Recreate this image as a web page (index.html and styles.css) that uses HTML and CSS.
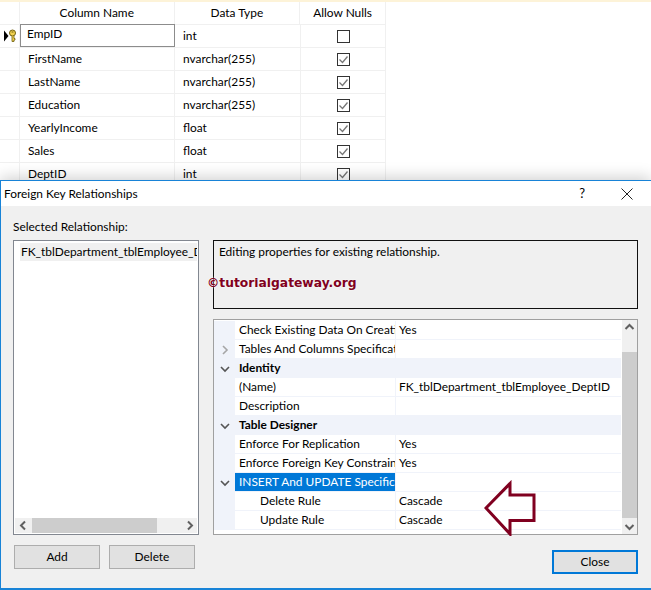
FILE: index.html
```html
<!DOCTYPE html>
<html lang="en">
<head>
<meta charset="utf-8">
<title>Foreign Key Relationships</title>
<link rel="stylesheet" href="styles.css">
</head>
<body>
<div class="page">
  <div class="topline"></div>
  <div class="table">
    <div class="row head"><div class="sel"></div><div class="c1">Column Name</div><div class="c2">Data Type</div><div class="c3">Allow Nulls</div></div>
    <div class="row">
      <div class="sel"><svg width="14" height="14" viewBox="0 0 14 14"><path d="M1 1.500l4.500 5.500L1 12.500z" fill="#000"/><circle cx="9.500" cy="4" r="3" fill="#f2d250" stroke="#6f6010"/><path d="M9 7v5.500h2V11h1V9.500h-1V7" fill="#f2d250" stroke="#6f6010" stroke-width=".8"/><path d="M8.500 3h2" stroke="#6f6010"/></svg></div>
      <div class="c1 editing">EmpID</div><div class="c2">int</div>
      <div class="c3"><svg class="cb" viewBox="0 0 13 13"><rect x=".5" y=".5" width="12" height="12" fill="#fff" stroke="#333"/></svg></div>
    </div>
    <div class="row"><div class="sel"></div><div class="c1">FirstName</div><div class="c2">nvarchar(255)</div><div class="c3"><svg class="cb" viewBox="0 0 13 13"><rect x=".5" y=".5" width="12" height="12" fill="#fff" stroke="#333"/><path d="M2.500 6.500l3 3 5-6" fill="none" stroke="#777" stroke-width="1.300"/></svg></div></div>
    <div class="row"><div class="sel"></div><div class="c1">LastName</div><div class="c2">nvarchar(255)</div><div class="c3"><svg class="cb" viewBox="0 0 13 13"><rect x=".5" y=".5" width="12" height="12" fill="#fff" stroke="#333"/><path d="M2.500 6.500l3 3 5-6" fill="none" stroke="#777" stroke-width="1.300"/></svg></div></div>
    <div class="row"><div class="sel"></div><div class="c1">Education</div><div class="c2">nvarchar(255)</div><div class="c3"><svg class="cb" viewBox="0 0 13 13"><rect x=".5" y=".5" width="12" height="12" fill="#fff" stroke="#333"/><path d="M2.500 6.500l3 3 5-6" fill="none" stroke="#777" stroke-width="1.300"/></svg></div></div>
    <div class="row"><div class="sel"></div><div class="c1">YearlyIncome</div><div class="c2">float</div><div class="c3"><svg class="cb" viewBox="0 0 13 13"><rect x=".5" y=".5" width="12" height="12" fill="#fff" stroke="#333"/><path d="M2.500 6.500l3 3 5-6" fill="none" stroke="#777" stroke-width="1.300"/></svg></div></div>
    <div class="row"><div class="sel"></div><div class="c1">Sales</div><div class="c2">float</div><div class="c3"><svg class="cb" viewBox="0 0 13 13"><rect x=".5" y=".5" width="12" height="12" fill="#fff" stroke="#333"/><path d="M2.500 6.500l3 3 5-6" fill="none" stroke="#777" stroke-width="1.300"/></svg></div></div>
    <div class="row"><div class="sel"></div><div class="c1">DeptID</div><div class="c2">int</div><div class="c3"><svg class="cb" viewBox="0 0 13 13"><rect x=".5" y=".5" width="12" height="12" fill="#fff" stroke="#333"/><path d="M2.500 6.500l3 3 5-6" fill="none" stroke="#777" stroke-width="1.300"/></svg></div></div>
  </div>

  <div class="dialog">
    <div class="titlebar">
      <span class="title">Foreign Key Relationships</span>
      <span class="help">?</span>
      <svg class="close-x" width="12" height="12" viewBox="0 0 12 12"><path d="M.5.5l11 11M11.500.5l-11 11" stroke="#222" stroke-width="1" fill="none"/></svg>
    </div>
    <div class="body">
      <div class="left">
        <div class="label">Selected Relationship:</div>
        <div class="listbox">
          <div class="item"><span>FK_tblDepartment_tblEmployee_DeptID</span></div>
          <div class="hscroll">
            <svg class="arrow" width="17" height="15" viewBox="0 0 17 15"><path d="M10 3.500L6 7.500l4 4" fill="none" stroke="#606060" stroke-width="2"/></svg>
            <div class="hthumb"></div>
            <svg class="arrow" width="15" height="15" viewBox="0 0 15 15"><path d="M6 3.500l4 4-4 4" fill="none" stroke="#606060" stroke-width="2"/></svg>
          </div>
        </div>
        <div class="buttons"><div class="btn">Add</div><div class="btn">Delete</div></div>
      </div>
      <div class="right">
        <div class="desc">Editing properties for existing relationship.
          <div class="mark">©tutorialgateway.org</div>
        </div>
        <div class="props">
          <div class="prows">
            <div class="p"><div class="g"></div><div class="n">Check Existing Data On Creation Or Re-Enabling</div><div class="v">Yes</div></div>
            <div class="p"><div class="g"><svg width="10" height="10" viewBox="0 0 10 10"><path d="M3 1l4 4-4 4" fill="none" stroke="#a6a6a6" stroke-width="1.600"/></svg></div><div class="n">Tables And Columns Specification</div><div class="v"></div></div>
            <div class="p cat"><div class="g"><svg width="10" height="10" viewBox="0 0 10 10"><path d="M1 3l4 4 4-4" fill="none" stroke="#555" stroke-width="1.600"/></svg></div><div class="n">Identity</div><div class="v"></div></div>
            <div class="p"><div class="g"></div><div class="n">(Name)</div><div class="v">FK_tblDepartment_tblEmployee_DeptID</div></div>
            <div class="p"><div class="g"></div><div class="n">Description</div><div class="v"></div></div>
            <div class="p cat"><div class="g"><svg width="10" height="10" viewBox="0 0 10 10"><path d="M1 3l4 4 4-4" fill="none" stroke="#555" stroke-width="1.600"/></svg></div><div class="n">Table Designer</div><div class="v"></div></div>
            <div class="p"><div class="g"></div><div class="n">Enforce For Replication</div><div class="v">Yes</div></div>
            <div class="p"><div class="g"></div><div class="n">Enforce Foreign Key Constraint</div><div class="v">Yes</div></div>
            <div class="p selected"><div class="g"><svg width="10" height="10" viewBox="0 0 10 10"><path d="M1 3l4 4 4-4" fill="none" stroke="#555" stroke-width="1.600"/></svg></div><div class="n">INSERT And UPDATE Specification</div><div class="v"></div></div>
            <div class="p child"><div class="g"></div><div class="n">Delete Rule</div><div class="v">Cascade</div></div>
            <div class="p child"><div class="g"></div><div class="n">Update Rule</div><div class="v">Cascade</div></div>
          </div>
          <div class="vscroll">
            <svg class="arrow" width="15" height="15" viewBox="0 0 15 15"><path d="M3.500 9l4-4 4 4" fill="none" stroke="#606060" stroke-width="2"/></svg>
            <div class="vthumb"></div>
            <svg class="arrow" width="15" height="15" viewBox="0 0 15 15"><path d="M3.500 6l4 4 4-4" fill="none" stroke="#606060" stroke-width="2"/></svg>
          </div>
          <svg class="bigarrow" width="54" height="56" viewBox="0 0 54 56"><path d="M2 28L26 3.500V15h24v25.500H26V54z" fill="none" stroke="#800020" stroke-width="3"/></svg>
        </div>
        <div class="actions"><div class="btn primary">Close</div></div>
      </div>
    </div>
  </div>
</div>
</body>
</html>
```
FILE: styles.css
```css
* { box-sizing: border-box; }
html, body { margin: 0; padding: 0; background: #fff; }
body { font: 11.9px/1 Lato, "Noto Sans", sans-serif; color: #000; }
.page { width: 651px; height: 590px; overflow: hidden; position: relative; }
.topline { height: 2px; background: #fdf3d8; }

.table { height: 178px; overflow: hidden; }
.row { display: flex; height: 23px; border-bottom: 1px solid #f0f0f0; width: 386px; }
.row > div { border-right: 1px solid #f0f0f0; display: flex; align-items: center; }
.row.head { height: 23px; border-bottom: 1px solid #f0f0f0; }
.sel { width: 20px; justify-content: center; }
.c1 { width: 155px; padding-left: 8px; }
.c2 { width: 126px; padding-left: 8px; }
.c3 { width: 85px; justify-content: center; }
.head .c1, .head .c2 { justify-content: center; padding-left: 0; }
.head .c3 { width: 86px; }
.row > .editing { border: 1px solid #8c8c8c; padding-left: 6px; padding-bottom: 3px; margin-top: -1px; }
.cb { width: 13px; height: 13px; }

.dialog { height: 410px; border: 1px solid #1883d7; border-right: 0; border-bottom-width: 2px; background: #f0f0f0; box-shadow: 0 -3px 14px rgba(0,0,0,.18); position: relative; }
.titlebar { height: 25px; background: #fff; display: flex; align-items: center; padding-left: 3px; padding-right: 18px; }
.title { flex: 1; }
.help { margin-right: 36px; font-size: 13px; }
.body { display: grid; grid-template-columns: 186px 425px; column-gap: 14px; padding-left: 12px; }
.left, .right { display: flex; flex-direction: column; }
.label { height: 34px; padding-top: 15px; }
.listbox { height: 295px; background: #fff; border: 1px solid #828790; padding: 2px 1px 1px; display: flex; flex-direction: column; }
.item { height: 18px; margin-left: 5px; background: #f0f0f0; overflow: hidden; white-space: nowrap; line-height: 17px; padding-left: 1px; }
.hscroll { margin-top: auto; height: 15px; background: #f0f0f0; display: flex; }
.hthumb { width: 125px; height: 15px; background: #cdcdcd; }
.hscroll .arrow:last-child { margin-left: auto; }
.buttons { display: flex; gap: 9px; margin: 10px 0 0 1px; }
.btn { width: 86px; height: 24px; background: #e1e1e1; border: 1px solid #adadad; display: flex; align-items: center; justify-content: center; }
.btn.primary { border: 2px solid #0078d7; }

.right { padding-top: 34px; }
.desc { height: 69px; border: 1px solid #111; padding: 4px 5px; position: relative; line-height: 14px; }
.mark { position: absolute; left: -7px; top: 35px; font: bold 12.3px/14px "DejaVu Sans", sans-serif; color: #800020; text-shadow: 0 0 2px #fff; white-space: nowrap; }
.props { height: 216px; margin-top: 10px; border: 1px solid #a0a0a0; background: #fff; display: flex; position: relative; }
.prows { width: 407px; padding-top: 1px; }
.p { height: 19px; display: flex; border-bottom: 1px solid #f0f3fa; }
.g { width: 21px; background: #f0f3fa; display: flex; align-items: center; justify-content: center; margin-bottom: -1px; }
.n { width: 161px; padding-left: 4px; border-right: 1px solid #f0f3fa; white-space: nowrap; overflow: hidden; line-height: 18px; }
.v { flex: 1; padding-left: 3px; white-space: nowrap; overflow: hidden; line-height: 18px; }
.cat { background: #f0f3fa; }
.cat .n { font-weight: 700; border-right: 0; }
.selected .n { background: #0078d7; color: #fff; }
.child .n { padding-left: 25px; }
.vscroll { width: 15px; margin-left: 1px; background: #f0f0f0; display: flex; flex-direction: column; align-items: center; height: 214px; }
.vthumb { width: 15px; height: 166px; margin-top: 17px; background: #cdcdcd; }
.vscroll .arrow:last-child { margin-top: auto; }
.bigarrow { position: absolute; left: 270px; top: 160px; }
.actions { display: flex; justify-content: flex-end; margin-top: 15px; }
```
